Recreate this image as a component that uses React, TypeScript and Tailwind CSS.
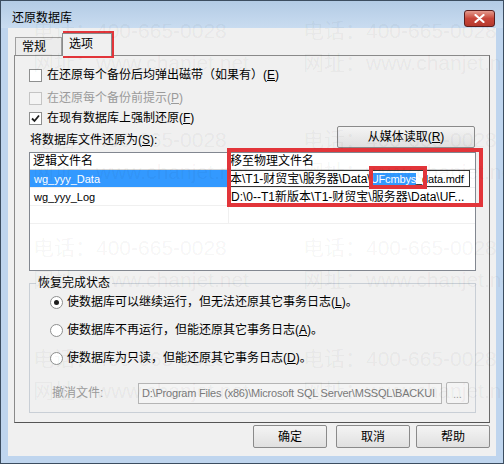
import type { ReactNode } from "react";

const ui = "font-['Liberation_Sans','Noto_Sans_CJK_SC',sans-serif]";

// faint watermark that sits over the dialog in the screenshot
const marks = [
  { cls: "left-[32px] top-[19px]", text: "电话：400-665-0028" },
  { cls: "left-[32px] top-[51px]", text: "网址：www.chanjet.net" },
  { cls: "left-[302px] top-[19px]", text: "电话：400-665-0028" },
  { cls: "left-[302px] top-[51px]", text: "网址：www.chanjet.net" },
  { cls: "left-[32px] top-[128px]", text: "电话：400-665-0028" },
  { cls: "left-[32px] top-[160px]", text: "网址：www.chanjet.net" },
  { cls: "left-[302px] top-[128px]", text: "电话：400-665-0028" },
  { cls: "left-[302px] top-[160px]", text: "网址：www.chanjet.net" },
  { cls: "left-[32px] top-[236px]", text: "电话：400-665-0028" },
  { cls: "left-[32px] top-[268px]", text: "网址：www.chanjet.net" },
  { cls: "left-[302px] top-[236px]", text: "电话：400-665-0028" },
  { cls: "left-[302px] top-[268px]", text: "网址：www.chanjet.net" },
  { cls: "left-[32px] top-[347px]", text: "电话：400-665-0028" },
  { cls: "left-[32px] top-[379px]", text: "网址：www.chanjet.net" },
  { cls: "left-[302px] top-[347px]", text: "电话：400-665-0028" },
  { cls: "left-[302px] top-[379px]", text: "网址：www.chanjet.net" },
];

function Key({ k }: { k: string }) {
  return (
    <>
      (<span className="underline">{k}</span>)
    </>
  );
}

function CheckBox({ checked, disabled }: { checked?: boolean; disabled?: boolean }) {
  return (
    <span
      className={
        disabled
          ? "w-[13px] h-[13px] shrink-0 border border-[#c4c4c4] bg-[#f4f4f4]"
          : "w-[13px] h-[13px] shrink-0 border border-[#8e8f8f] bg-white flex items-center justify-center"
      }
    >
      {checked && (
        <svg width="9" height="9" viewBox="0 0 9 9">
          <path d="M1 4.5 L3.5 7 L8 1.5" stroke="#1e1e1e" strokeWidth="1.8" fill="none" />
        </svg>
      )}
    </span>
  );
}

function Radio({ on }: { on?: boolean }) {
  return (
    <span className="w-[13px] h-[13px] shrink-0 rounded-full border border-[#8e8f8f] bg-white flex items-center justify-center">
      {on && <span className="w-[5px] h-[5px] rounded-full bg-[#1e1e1e]" />}
    </span>
  );
}

function Btn({ children, wide }: { children: ReactNode; wide?: boolean }) {
  return (
    <button
      className={
        (wide ? "w-[138px] h-[22px] " : "w-[74px] h-[23px] ") +
        "border border-[#8a8a8a] rounded-[2px] bg-linear-to-b from-[#f4f4f4] to-[#e0e0e0] text-[12px] leading-[16px] text-black flex items-center justify-center"
      }
    >
      {children}
    </button>
  );
}

export default function App() {
  return (
    <div className={"relative w-[504px] h-[464px] border border-[#3c4d60] bg-[#bfd5ee] flex flex-col px-[7px] pb-[7px] " + ui}>
      {/* title bar */}
      <div className="h-[27px] -mx-[7px] pl-[11px] pr-[8px] pt-[9px] flex items-start bg-linear-to-b from-[#b3cbe5] to-[#c9dcf0]">
        <span className="text-[12px] leading-[16px] text-black">还原数据库</span>
        <span className="ml-auto w-[31px] h-[17px] rounded-[3px] border border-[#5a1e1e] bg-linear-to-b from-[#e39a8e] via-[#c8463a] to-[#b73a2e] flex items-center justify-center">
          <svg width="11" height="9" viewBox="0 0 11 9">
            <path d="M1.5 1 L9.5 8 M9.5 1 L1.5 8" stroke="white" strokeWidth="2.2" strokeLinecap="round" />
          </svg>
        </span>
      </div>

      {/* client area */}
      <div className="flex-1 bg-[#f0f0f0] pt-[5px] flex flex-col">
        <div className="h-[23px] pl-[7px] flex items-end text-[12px] leading-[16px] text-black">
          <div className="h-[18px] mb-px w-[47px] border border-b-0 border-[#a0a0a0] bg-[#ececec] pl-[6px] flex items-center">
            常规
          </div>
          <div className="relative z-10 h-[23px] w-[50px] border border-b-0 border-[#8a8a8a] bg-[#f0f0f0] pl-[6px] pt-[2px]">
            选项
          </div>
        </div>

        <div className="-mt-px ml-[6px] w-[476px] h-[368px] border border-[#8a8a8a] border-r-[#6a6a6a] border-b-[#555] pt-[11px] pl-[14px] flex flex-col text-[12px] leading-[16px] text-black">
          <div className="h-[16px] flex items-center gap-[5px]">
            <CheckBox />
            <span>
              在还原每个备份后均弹出磁带（如果有）<Key k="E" />
            </span>
          </div>
          <div className="h-[16px] mt-[7px] flex items-center gap-[5px] text-[#9a9a9a]">
            <CheckBox disabled />
            <span>
              在还原每个备份前提示<Key k="P" />
            </span>
          </div>
          <div className="h-[16px] mt-[4px] flex items-center gap-[5px]">
            <CheckBox checked />
            <span>
              在现有数据库上强制还原<Key k="F" />
            </span>
          </div>

          <div className="w-[446px] flex items-end justify-between">
            <span className="pl-px">
              将数据库文件还原为<Key k="S" />:
            </span>
            <Btn wide>
              从媒体读取<Key k="R" />
            </Btn>
          </div>

          {/* file list */}
          <div className="relative mt-[4px] w-[447px] h-[119px] border border-[#828790] bg-white">
            <div className="h-[17px] flex border-b border-[#d5d5d5]">
              <div className="w-[199px] pl-[3px] border-r border-[#d5d5d5]">逻辑文件名</div>
              <div className="flex-1 pl-[1px]">移至物理文件名</div>
            </div>
            <div className="h-[18px] flex border-b border-[#f0f0f0]">
              <div className="w-[199px] pl-[4px] bg-[#3399ff] text-white text-[11px] flex items-center">wg_yyy_Data</div>
              <div className="w-[241px] border border-[#333] flex items-center whitespace-nowrap overflow-hidden">
                本\T1-财贸宝\服务器\Data\
                <span className="text-[11px] tracking-[-0.15px]">
                  <span className="bg-[#3399ff] text-white">UFcmbys</span>_data.mdf
                </span>
              </div>
            </div>
            <div className="h-[18px] flex border-b border-[#f0f0f0]">
              <div className="w-[199px] pl-[4px] border-r border-[#f0f0f0] text-[11px] flex items-center">wg_yyy_Log</div>
              <div className="flex-1 pl-[2px] flex items-center whitespace-nowrap overflow-hidden">
                D:\0--T1新版本\T1-财贸宝\服务器\Data\UF...
              </div>
            </div>
            <div className="h-[18px] flex border-b border-[#f0f0f0]">
              <div className="w-[199px] border-r border-[#f0f0f0]" />
            </div>

            {/* red annotation boxes */}
            <div className="absolute left-[197px] top-[-5px] w-[256px] h-[59px] border-[4px] border-[#e2353a]" />
            <div className="absolute left-[339px] top-[13px] w-[58px] h-[23px] border-[4px] border-[#e2353a]" />
          </div>

          {/* restore state group */}
          <fieldset className="mt-[4px] w-[447px] h-[138px] border border-[#c9cfd6] px-0 pb-0 flex flex-col">
            <legend className="ml-[6px] px-[2px] leading-[16px]">恢复完成状态</legend>
            <div className="pl-[20px] pt-[3px] h-[16px] box-content flex items-center gap-[4px]">
              <Radio on />
              <span>
                使数据库可以继续运行，但无法还原其它事务日志<Key k="L" />。
              </span>
            </div>
            <div className="pl-[20px] mt-[12px] h-[16px] flex items-center gap-[4px]">
              <Radio />
              <span>
                使数据库不再运行，但能还原其它事务日志<Key k="A" />。
              </span>
            </div>
            <div className="pl-[20px] mt-[12px] h-[16px] flex items-center gap-[4px]">
              <Radio />
              <span>
                使数据库为只读，但能还原其它事务日志<Key k="D" />。
              </span>
            </div>
            <div className="pl-[22px] mt-[16px] flex items-center">
              <span className="w-[86px] text-[#9a9a9a]">撤消文件:</span>
              <div className="w-[304px] h-[21px] border border-[#b5b5b5] bg-[#f4f4f4] pl-[3px] text-[11px] tracking-[-0.2px] text-[#7a7a7a] flex items-center whitespace-nowrap overflow-hidden">
                D:\Program Files (x86)\Microsoft SQL Server\MSSQL\BACKUI
              </div>
              <div className="ml-[4px] w-[23px] h-[22px] border border-[#b5b5b5] rounded-[2px] bg-[#f4f4f4] text-[#9a9a9a] text-[10px] flex items-end justify-center pb-[3px] leading-[10px]">
                ...
              </div>
            </div>
          </fieldset>
        </div>

        <div className="mt-[2px] pr-[6px] flex justify-end">
          <Btn>确定</Btn>
          <span className="w-[9px]" />
          <Btn>取消</Btn>
          <span className="w-[6px]" />
          <Btn>帮助</Btn>
        </div>
      </div>

      {/* red box around the selected tab */}
      <div className="absolute left-[62px] top-[30px] w-[51px] h-[27px] border-[3px] border-[#e2353a]" />

      <div className="pointer-events-none absolute inset-0 overflow-hidden">
        {marks.map((m, i) => (
          <span
            key={i}
            className={"absolute whitespace-nowrap text-[21px] leading-[21px] text-[rgba(0,0,0,0.05)] " + m.cls}
          >
            {m.text}
          </span>
        ))}
      </div>
    </div>
  );
}
